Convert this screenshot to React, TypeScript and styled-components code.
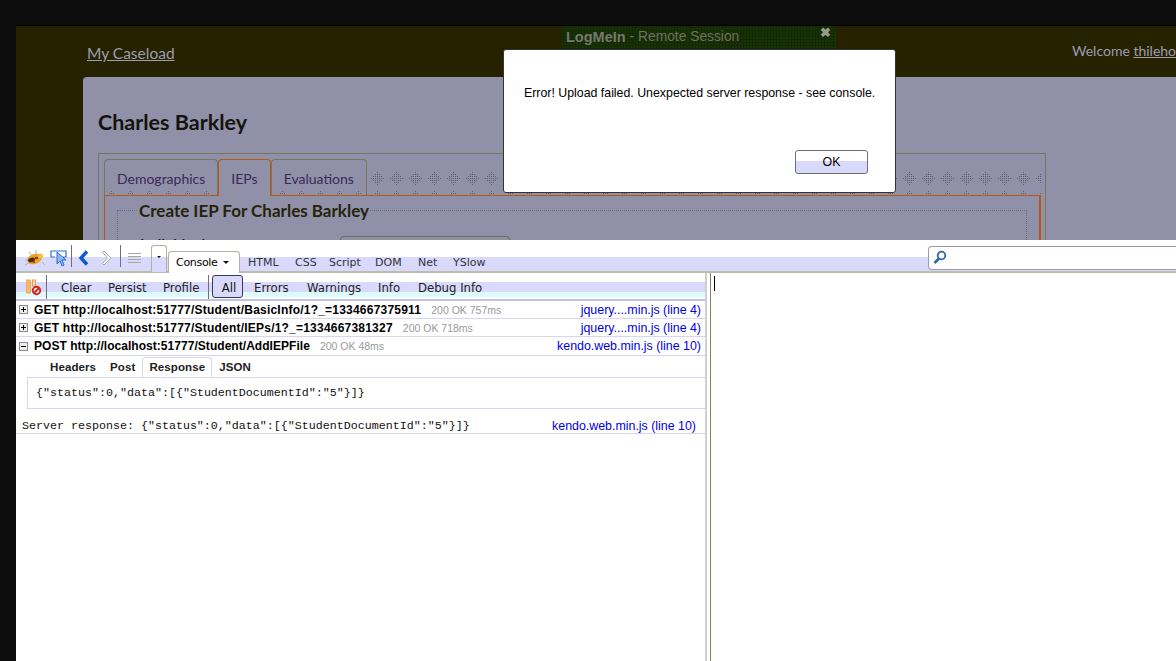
import React from "react";
import styled, { createGlobalStyle } from "styled-components";

const GlobalStyle = createGlobalStyle`
  html, body {
    margin: 0;
    padding: 0;
    background: #0c0c0d;
    overflow: hidden;
  }
  * {
    box-sizing: border-box;
  }
`;

// little dotted diamonds behind the page tabs, one 19px tile
const diamondDots = [
  [7, 1], [5, 3], [7, 3], [9, 3], [3, 5], [5, 5], [7, 5], [9, 5], [11, 5],
  [1, 7], [3, 7], [5, 7], [7, 7], [9, 7], [11, 7], [13, 7],
  [3, 9], [5, 9], [7, 9], [9, 9], [11, 9], [5, 11], [7, 11], [9, 11], [7, 13],
]
  .map(([x, y]) => `radial-gradient(circle at ${x + 0.5}px ${y + 0.5}px, #5c5c80 0.5px, transparent 0.55px)`)
  .join(", ");

const Screen = styled.div`
  position: relative;
  width: 1176px;
  height: 661px;
  overflow: hidden;
  padding: 25px 0 0 16px;
  display: flex;
  flex-direction: column;
  background: #0c0c0d;
`;

const Page = styled.div`
  height: 215px;
  flex: none;
  overflow: hidden;
  border-top: 1px solid #000;
  background: #262200;
  font-family: "Lato", "DejaVu Sans", sans-serif;
`;

const Header = styled.div`
  height: 51px;
  display: grid;
  grid-template-columns: 985px 1fr;
  padding-left: 71px;
  color: #9c9cb2;
  font-size: 14px;
  white-space: nowrap;
`;

const HeaderLink = styled.a`
  display: block;
  color: #9c9cb2;
  text-decoration: underline;
  font-size: 15.5px;
  padding-top: 18px;
`;

const Welcome = styled.div`
  padding-top: 16px;
  overflow: hidden;
`;

const Panel = styled.div`
  margin-left: 67px;
  height: 170px;
  padding: 31px 0 0 15px;
  background: #9090a8;
  border-top-left-radius: 4px;
`;

const Name = styled.h1`
  margin: 0 0 17px;
  font-size: 21.5px;
  line-height: 28px;
  font-weight: 700;
  color: #14140c;
`;

const TabFrame = styled.div`
  width: 948px;
  height: 90px;
  padding: 5px 4px 0 5px;
  border: 1px solid #77775f;
  border-bottom: none;
`;

const TabStrip = styled.div`
  display: flex;
  height: 37px;
  position: relative;

  &::before,
  &::after {
    content: "";
    position: absolute;
    left: 0;
    right: 0;
    bottom: 0;
    background-image: ${diamondDots};
    background-size: 19px 19px;
  }
  &::before {
    height: 25px;
  }
  &::after {
    height: 6px;
    z-index: 2;
  }
`;

const PageTab = styled.div<{ $active?: boolean }>`
  height: 37px;
  padding: 10px 12px 0;
  font-size: 14px;
  color: #3a2a55;
  background: #9090a8;
  border: 1px solid ${(p) => (p.$active ? "#b45a10" : "#77775f")};
  border-bottom: none;
  border-radius: 4px 4px 0 0;
  position: relative;
  z-index: ${(p) => (p.$active ? 3 : 1)};
`;

const TabBody = styled.div`
  height: 60px;
  margin-top: -1px;
  padding: 14px 12px 0 12px;
  border: 1px solid #b45a10;
  border-right-width: 2px;
  position: relative;
  z-index: 2;
`;

const Fieldset = styled.div`
  height: 40px;
  border-top: 1px dotted #6a6a8a;
  border-right: 1px dotted #6a6a70;
  border-left: 1px dotted #6a6a8a;
  padding-left: 20px;
`;

const Legend = styled.div`
  display: block;
  width: fit-content;
  margin-top: -10px;
  padding: 0 1px;
  height: 20px;
  line-height: 20px;
  font-size: 17px;
  font-weight: 700;
  color: #26230a;
  background: #9090a8;
`;

const FormRow = styled.div`
  display: flex;
  align-items: flex-start;
  padding-top: 12px;
`;

const FieldLabel = styled.div`
  width: 202px;
  flex: none;
  padding: 2px 0 0 2px;
  font-size: 15px;
  line-height: 18px;
  font-weight: 700;
  color: #26230a;
`;

const PageField = styled.div`
  width: 170px;
  height: 12px;
  margin-top: 3px;
  border: 1px solid #6f6f5c;
  border-radius: 4px 4px 0 0;
  border-bottom: none;
`;

const Dialog = styled.div`
  position: absolute;
  left: 503px;
  top: 49px;
  width: 393px;
  height: 144px;
  background: #fff;
  border: 1px solid #333;
  border-radius: 3px;
  z-index: 3;
  font-family: "Liberation Sans", Arial, sans-serif;
  font-size: 12.35px;
  color: #000;
  padding: 36px 0 0 20px;
`;

const DialogText = styled.div`
  height: 64px;
`;

const DialogButton = styled.button`
  display: block;
  margin-left: 271px;
  width: 73px;
  height: 24px;
  padding: 0;
  border: 1px solid #6f6f6f;
  border-radius: 3px;
  font: 12.35px "Liberation Sans", Arial, sans-serif;
  color: #000;
  background: linear-gradient(#fff 0, #fff 10px, #d9d9fb 10px, #d9d9fb 100%);
`;

const LogMeIn = styled.div`
  position: absolute;
  left: 562px;
  top: 26px;
  width: 274px;
  height: 26px;
  z-index: 2;
  display: flex;
  align-items: flex-start;
  padding: 3px 5px 0 4px;
  background-color: #1c3204;
  background-image: radial-gradient(#0f2a05 1px, transparent 1.2px);
  background-size: 3px 3px;
  border-bottom: 2px solid #c9c9ee;
  border-radius: 0 0 3px 3px;
  font-family: "Liberation Sans", Arial, sans-serif;
  font-size: 13.8px;
  color: #6f6f62;
  white-space: nowrap;
`;

const LogMeInName = styled.b`
  margin-right: 4px;
  color: #77776c;
  font-size: 14.5px;
`;

const LogMeInClose = styled.span`
  margin-left: auto;
  margin-top: -4px;
  font-size: 13px;
  font-weight: 700;
  color: #9a9a90;
`;

const Firebug = styled.div`
  flex: 1;
  min-height: 0;
  display: flex;
  flex-direction: column;
  background: #fff;
  font-family: "DejaVu Sans", sans-serif;
`;

const MainBar = styled.div`
  height: 33px;
  flex: none;
  display: flex;
  align-items: flex-end;
  padding-left: 7px;
  position: relative;
  background: linear-gradient(#fff 0, #fff 17px, #d9d9fb 17px, #d9d9fb 31px, #bdbdad 31px);
`;

const IconSlot = styled.div<{ $w: number }>`
  width: ${(p) => p.$w}px;
  height: 26px;
  flex: none;
  display: flex;
  align-items: center;
  justify-content: center;
  align-self: flex-start;
  margin-top: 5px;
`;

const Sep = styled.div<{ $h?: number }>`
  width: 1px;
  height: ${(p) => p.$h ?? 22}px;
  flex: none;
  background: #70707a;
`;

const BarSep = styled(Sep)`
  align-self: flex-start;
  margin-top: 5px;
`;

const MenuButton = styled.div`
  width: 16px;
  height: 27px;
  flex: none;
  margin: 5px 1px 0 2px;
  align-self: flex-start;
  padding-top: 10px;
  display: flex;
  justify-content: center;
  border: 1px solid #b0b0a4;
  border-bottom: none;
  border-radius: 3px 3px 0 0;
  background: linear-gradient(#fff 0, #fff 11px, #d9d9fb 11px);
`;

const Caret = styled.i<{ $w: number }>`
  display: block;
  width: 0;
  height: 0;
  border-left: ${(p) => p.$w}px solid transparent;
  border-right: ${(p) => p.$w}px solid transparent;
  border-top: ${(p) => p.$w}px solid #111;
`;

const ConsoleTab = styled.div`
  width: 72px;
  height: 22px;
  display: flex;
  align-items: center;
  gap: 5px;
  padding: 0 0 0 7px;
  border: 1px solid #b0b0a4;
  border-bottom: none;
  border-radius: 4px 4px 0 0;
  background: #fff;
  font-size: 11px;
  letter-spacing: -0.3px;
  color: #000;
`;

const PanelTabs = styled.div`
  display: flex;
  height: 22px;
  align-items: center;
  padding-left: 8px;
`;

const PanelTab = styled.span<{ $w: number }>`
  width: ${(p) => p.$w}px;
  font-size: 11px;
  color: #33333a;
`;

const SearchBox = styled.div`
  position: absolute;
  left: 912px;
  top: 6px;
  width: 260px;
  height: 24px;
  padding: 3px 0 0 4px;
  background: #fff;
  border: 1px solid #9a9ab4;
  border-right: none;
  border-radius: 4px 0 0 4px;
`;

const SideBySide = styled.div`
  flex: 1;
  min-height: 0;
  display: flex;
`;

const LeftPane = styled.div`
  width: 689px;
  flex: none;
  display: flex;
  flex-direction: column;
`;

const ConsoleBar = styled.div`
  height: 28px;
  flex: none;
  display: flex;
  align-items: center;
  padding: 1px 0 0 10px;
  background: linear-gradient(#fff 0, #fff 9px, #d9d9fb 9px, #d9d9fb 19px, #dcfbfb 19px, #dcfbfb 24px, #fff 24px);
  border-bottom: 2px solid #c0c0ea;
`;

const ConsoleIcon = styled.div`
  width: 20px;
  flex: none;
  display: flex;
`;

const ToolLabel = styled.span<{ $w: number }>`
  width: ${(p) => p.$w}px;
  flex: none;
  padding-top: 2px;
  font-size: 11.7px;
  color: #222;
`;

const FilterAll = styled.div`
  width: 31px;
  height: 23px;
  flex: none;
  margin: 0 11px 0 3px;
  padding-left: 3px;
  text-align: center;
  line-height: 24px;
  font-size: 11.7px;
  color: #111;
  background: #d9d9fb;
  border: 1px solid #3b3b55;
  border-radius: 3px;
`;

const LogRow = styled.div<{ $h?: number }>`
  height: ${(p) => p.$h ?? 18}px;
  flex: none;
  display: flex;
  align-items: center;
  padding: 0 4px 0 3px;
  border-bottom: 1px solid #d6d6ee;
  white-space: nowrap;
`;

const Toggle = styled.span`
  width: 9px;
  height: 9px;
  flex: none;
  margin-right: 6px;
  position: relative;
  border: 1px solid #8a8a8a;
  background: #eee;
  &::before {
    content: "";
    position: absolute;
    left: 1px;
    right: 1px;
    top: 3px;
    height: 1px;
    background: #000;
  }
`;

const TogglePlus = styled(Toggle)`
  &::after {
    content: "";
    position: absolute;
    top: 1px;
    bottom: 1px;
    left: 3px;
    width: 1px;
    background: #000;
  }
`;

const Request = styled.span`
  font-family: "Liberation Sans", Arial, sans-serif;
  font-size: 12px;
  letter-spacing: 0.216px;
  font-weight: 700;
  color: #000;
`;

const PostRequest = styled(Request)`
  letter-spacing: 0.04px;
`;

const Status = styled.span`
  margin-left: 10px;
  font-family: "Liberation Sans", Arial, sans-serif;
  font-size: 10.5px;
  color: #999;
`;

const Source = styled.a`
  margin-left: auto;
  font-family: "Liberation Sans", Arial, sans-serif;
  font-size: 12.4px;
  color: #0000e6;
`;

const DetailTabs = styled.div`
  height: 21px;
  flex: none;
  display: flex;
  align-items: flex-end;
  padding-left: 27px;
  font-family: "Liberation Sans", Arial, sans-serif;
  font-size: 11.5px;
  letter-spacing: 0.1px;
  font-weight: 700;
  color: #222;
`;

const DetailTab = styled.span<{ $active?: boolean }>`
  height: 20px;
  padding: 3px 6px 0;
  border: 1px solid ${(p) => (p.$active ? "#d6d6ee" : "transparent")};
  border-bottom: none;
  border-radius: 3px 3px 0 0;
`;

const ResponseBox = styled.div`
  height: 32px;
  flex: none;
  margin-left: 11px;
  padding-left: 8px;
  display: flex;
  align-items: center;
  border: 1px solid #d6d6ee;
  border-right: none;
`;

const Mono = styled.span`
  font-family: "Liberation Mono", "Courier New", monospace;
  font-size: 11.67px;
  color: #111;
`;

const ServerRow = styled(LogRow)`
  margin-top: 8px;
  padding: 1px 9px 0 6px;
`;

const Divider = styled.div`
  width: 6px;
  flex: none;
  border-left: 2px solid #cfcfcf;
  border-right: 1px solid #808070;
  background: #fff;
`;

const RightPane = styled.div`
  flex: 1;
  padding: 3px 0 0 3px;
`;

const TextCursor = styled.div`
  width: 1px;
  height: 15px;
  background: #000;
`;

const BugIcon = () => (
  <svg width="22" height="18" viewBox="0 0 22 18">
    <path d="M1 16l5-3M1 11l5 0M5 3l3 4M12 1l0 4M18 13l3 3" stroke="#b5b0a0" strokeWidth="1" fill="none" />
    <ellipse cx="10.5" cy="10" rx="7.5" ry="5" transform="rotate(-18 10.5 10)" fill="#e9a227" />
    <ellipse cx="7.5" cy="11" rx="3.5" ry="2.2" transform="rotate(-18 7.5 11)" fill="#4a2a10" />
    <ellipse cx="12.5" cy="9" rx="1.8" ry="1.3" fill="#a03010" />
    <circle cx="16.5" cy="7" r="2.6" fill="#f4c040" />
    <circle cx="10" cy="13" r="1" fill="#7a3010" />
  </svg>
);

const InspectIcon = () => (
  <svg width="18" height="18" viewBox="0 0 18 18">
    <path d="M5 8H1V2h15v6h-3" fill="#fff" stroke="#2d6fd0" strokeWidth="1.2" />
    <path d="M7 3l0 12 3-3 2 5 2-1-2-5h4z" fill="#8cb8f0" stroke="#2d6fd0" />
  </svg>
);

const BackIcon = () => (
  <svg width="14" height="16" viewBox="0 0 14 16">
    <path d="M10 1.5L4 8l6 6.5" fill="none" stroke="#0a58d8" strokeWidth="3.4" />
  </svg>
);

const ForwardIcon = () => (
  <svg width="14" height="16" viewBox="0 0 14 16">
    <path d="M3 1l7 7-7 7 -1.5-1.5L6.5 8 1.5 2.5z" fill="#fff" stroke="#a5a5a5" />
  </svg>
);

const ListIcon = () => (
  <svg width="16" height="12" viewBox="0 0 16 12">
    <path d="M1 1.5h13M1 4.5h13M1 7.5h13M1 10.5h13" stroke="#a8a89c" />
  </svg>
);

const ClearIcon = () => (
  <svg width="16" height="18" viewBox="0 0 16 18">
    <rect x="0.5" y="2" width="4" height="13" fill="#f7b860" stroke="#ecae60" />
    <rect x="6.5" y="2" width="3" height="6" fill="#f7dcae" stroke="#d8a060" />
    <circle cx="10.5" cy="12.5" r="3.7" fill="#fff" stroke="#e02020" strokeWidth="2" />
    <path d="M8 15l5-5" stroke="#e02020" strokeWidth="2" />
  </svg>
);

const SearchIcon = () => (
  <svg width="14" height="15" viewBox="0 0 14 15">
    <circle cx="8.5" cy="5.5" r="3.8" fill="#fff" stroke="#2a68a8" strokeWidth="1.8" />
    <path d="M6 8.5L1.5 13" stroke="#2a68a8" strokeWidth="2.6" />
  </svg>
);

const App = () => {
  return (
    <Screen>
      <GlobalStyle />
      <Page>
        <Header>
          <div>
            <HeaderLink>My Caseload</HeaderLink>
          </div>
          <Welcome>
            Welcome <u>thilehoang</u>
          </Welcome>
        </Header>
        <Panel>
          <Name>Charles Barkley</Name>
          <TabFrame>
            <TabStrip>
              <PageTab>Demographics</PageTab>
              <PageTab $active>IEPs</PageTab>
              <PageTab>Evaluations</PageTab>
            </TabStrip>
            <TabBody>
              <Fieldset>
                <Legend>Create IEP For Charles Barkley</Legend>
                <FormRow>
                  <FieldLabel>Individual</FieldLabel>
                  <PageField />
                </FormRow>
              </Fieldset>
            </TabBody>
          </TabFrame>
        </Panel>
      </Page>

      <LogMeIn>
        <LogMeInName>LogMeIn</LogMeInName> - Remote Session
        <LogMeInClose>✖</LogMeInClose>
      </LogMeIn>

      <Dialog>
        <DialogText>Error! Upload failed. Unexpected server response - see console.</DialogText>
        <DialogButton>OK</DialogButton>
      </Dialog>

      <Firebug>
        <MainBar>
          <IconSlot $w={24}>
            <BugIcon />
          </IconSlot>
          <IconSlot $w={24}>
            <InspectIcon />
          </IconSlot>
          <BarSep />
          <IconSlot $w={23}>
            <BackIcon />
          </IconSlot>
          <IconSlot $w={25}>
            <ForwardIcon />
          </IconSlot>
          <BarSep />
          <IconSlot $w={28}>
            <ListIcon />
          </IconSlot>
          <MenuButton>
            <Caret $w={2} />
          </MenuButton>
          <ConsoleTab>
            Console <Caret $w={3.5} />
          </ConsoleTab>
          <PanelTabs>
            <PanelTab $w={47}>HTML</PanelTab>
            <PanelTab $w={34}>CSS</PanelTab>
            <PanelTab $w={46}>Script</PanelTab>
            <PanelTab $w={43}>DOM</PanelTab>
            <PanelTab $w={35}>Net</PanelTab>
            <PanelTab $w={40}>YSlow</PanelTab>
          </PanelTabs>
          <SearchBox>
            <SearchIcon />
          </SearchBox>
        </MainBar>
        <SideBySide>
          <LeftPane>
            <ConsoleBar>
              <ConsoleIcon>
                <ClearIcon />
              </ConsoleIcon>
              <Sep $h={24} />
              <ToolLabel $w={14} />
              <ToolLabel $w={47}>Clear</ToolLabel>
              <ToolLabel $w={55}>Persist</ToolLabel>
              <ToolLabel $w={45}>Profile</ToolLabel>
              <Sep $h={24} />
              <FilterAll>All</FilterAll>
              <ToolLabel $w={53}>Errors</ToolLabel>
              <ToolLabel $w={71}>Warnings</ToolLabel>
              <ToolLabel $w={40}>Info</ToolLabel>
              <ToolLabel $w={70}>Debug Info</ToolLabel>
            </ConsoleBar>
            <LogRow>
              <TogglePlus />
              <Request>GET http://localhost:51777/Student/BasicInfo/1?_=1334667375911</Request>
              <Status>200 OK 757ms</Status>
              <Source>jquery....min.js (line 4)</Source>
            </LogRow>
            <LogRow>
              <TogglePlus />
              <Request>GET http://localhost:51777/Student/IEPs/1?_=1334667381327</Request>
              <Status>200 OK 718ms</Status>
              <Source>jquery....min.js (line 4)</Source>
            </LogRow>
            <LogRow $h={19}>
              <Toggle />
              <PostRequest>POST http://localhost:51777/Student/AddIEPFile</PostRequest>
              <Status>200 OK 48ms</Status>
              <Source>kendo.web.min.js (line 10)</Source>
            </LogRow>
            <DetailTabs>
              <DetailTab>Headers</DetailTab>
              <DetailTab>Post</DetailTab>
              <DetailTab $active>Response</DetailTab>
              <DetailTab>JSON</DetailTab>
            </DetailTabs>
            <ResponseBox>
              <Mono>{'{"status":0,"data":[{"StudentDocumentId":"5"}]}'}</Mono>
            </ResponseBox>
            <ServerRow $h={17}>
              <Mono>{'Server response: {"status":0,"data":[{"StudentDocumentId":"5"}]}'}</Mono>
              <Source>kendo.web.min.js (line 10)</Source>
            </ServerRow>
          </LeftPane>
          <Divider />
          <RightPane>
            <TextCursor />
          </RightPane>
        </SideBySide>
      </Firebug>
    </Screen>
  );
};

export default App;
